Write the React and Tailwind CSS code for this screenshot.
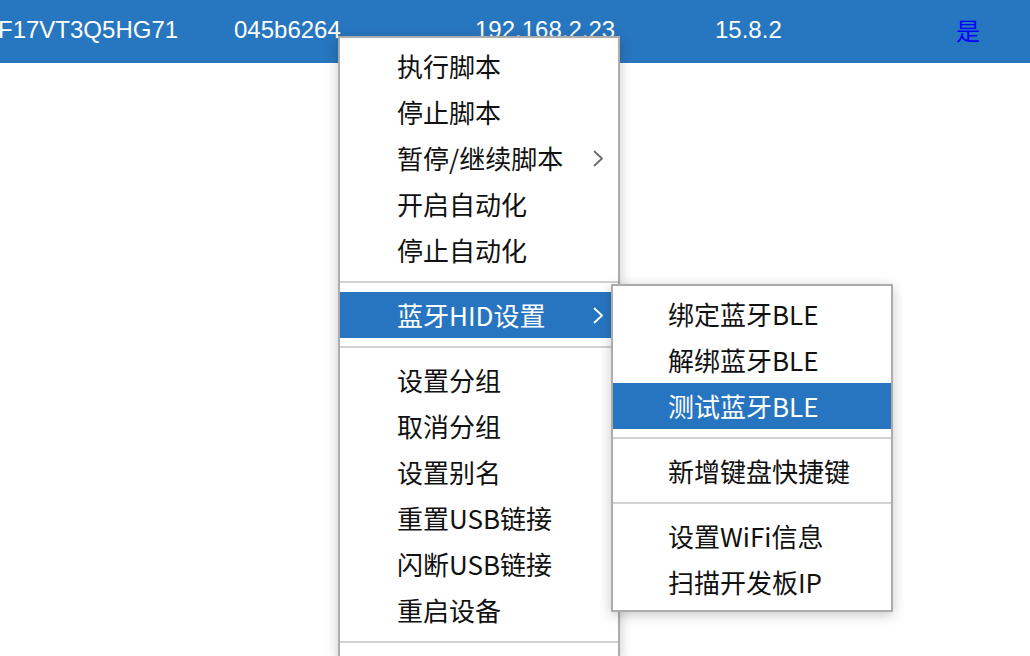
import React from 'react';

const cjk = { fontFamily: '"Noto Sans CJK SC", sans-serif' };

const mainItems = [
  { label: '执行脚本' },
  { label: '停止脚本' },
  { label: '暂停/继续脚本', sub: true },
  { label: '开启自动化' },
  { label: '停止自动化' },
  { sep: true },
  { label: '蓝牙HID设置', sub: true, active: true },
  { sep: true },
  { label: '设置分组' },
  { label: '取消分组' },
  { label: '设置别名' },
  { label: '重置USB链接' },
  { label: '闪断USB链接' },
  { label: '重启设备' },
  { sep: true },
];

const bleItems = [
  { label: '绑定蓝牙BLE' },
  { label: '解绑蓝牙BLE' },
  { label: '测试蓝牙BLE', active: true },
  { sep: true },
  { label: '新增键盘快捷键' },
  { sep: true },
  { label: '设置WiFi信息' },
  { label: '扫描开发板IP' },
];

function Chevron({ light }) {
  return (
    <svg width="11" height="17" viewBox="0 0 11 17" fill="none" className="shrink-0">
      <path
        d="M1.5 1.5 L9 8.5 L1.5 15.5"
        stroke={light ? '#ffffff' : '#6b6b6b'}
        strokeWidth="1.8"
        strokeLinecap="round"
        strokeLinejoin="round"
      />
    </svg>
  );
}

function Menu({ items, pl }) {
  return (
    <div className="bg-white border-2 border-[#acacac] py-[5px] shadow-[0_3px_12px_rgba(0,0,0,0.22)]">
      {items.map((it, i) =>
        it.sep ? (
          <div key={i} className="pt-[8px] pb-[9px]">
            <div className="h-[2px] bg-[#d2d2d2]" />
          </div>
        ) : (
          <div
            key={i}
            className={
              'h-[46px] flex items-center justify-between pr-[14px] text-[26px] leading-[44px] ' +
              (it.active ? 'bg-[#2775c0] text-white' : 'text-[#111]')
            }
            style={{ paddingLeft: pl }}
          >
            <span>{it.label}</span>
            {it.sub && <Chevron light={it.active} />}
          </div>
        )
      )}
    </div>
  );
}

export default function App() {
  return (
    <div className="relative w-[1030px] h-[656px] overflow-hidden bg-white" style={cjk}>
      <div
        className="h-[63px] bg-[#2776c0] flex text-white text-[24px] leading-[59px] whitespace-nowrap"
        style={{ fontFamily: '"Liberation Sans", "Noto Sans CJK SC", sans-serif' }}
      >
        <div className="w-[236px] ml-[-2px] shrink-0">F17VT3Q5HG71</div>
        <div className="w-[241px] shrink-0">045b6264</div>
        <div className="w-[240px] shrink-0">192.168.2.23</div>
        <div className="w-[241px] shrink-0">15.8.2</div>
        <div className="text-[#0000ff]" style={cjk}>是</div>
      </div>

      <div className="absolute left-[338px] top-[36px] w-[282px]">
        <Menu items={mainItems} pl={57} />
      </div>

      <div className="absolute left-[611px] top-[284px] w-[282px]">
        <Menu items={bleItems} pl={55} />
      </div>
    </div>
  );
}
